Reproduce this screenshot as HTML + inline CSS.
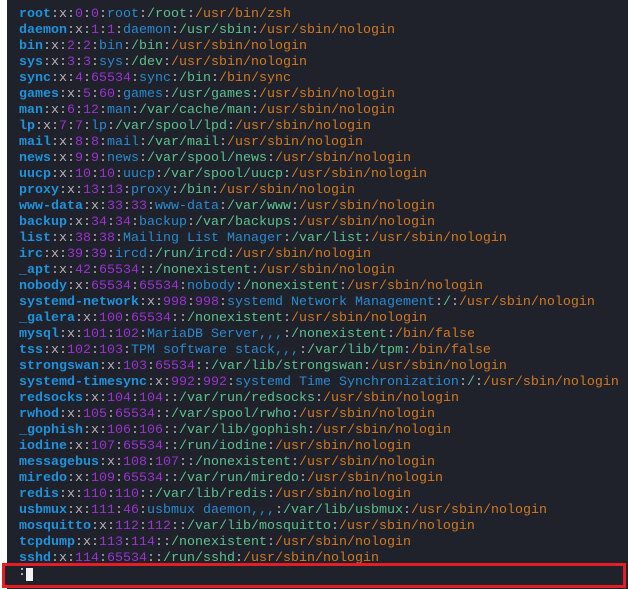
<!DOCTYPE html>
<html><head><meta charset="utf-8"><style>
html,body{margin:0;padding:0;width:628px;height:589px;overflow:hidden;background:#fff}
#t{position:absolute;left:7px;top:0;width:621px;height:589px;background:#1f212b;}
pre{position:absolute;left:19px;top:7px;margin:0;font-family:"Liberation Mono",monospace;font-size:13.33px;line-height:16px;color:#b9b3bb}
.u{color:#1f93dc;font-weight:bold}.n{color:#9b33cf}.g{color:#2a8bd0}.h{color:#5dc28e}.o{color:#d27a22}
#box{position:absolute;left:2px;top:563px;width:618px;height:19px;border:3px solid #e41e24;background:#1f212b}
#cur{position:absolute;left:26px;top:568px;width:7px;height:13px;background:#f2f2f2}
#col{position:absolute;left:18px;top:565px;font-family:"Liberation Mono",monospace;font-size:13.33px;line-height:16px;color:#ddd}
</style></head><body><div id="t"></div>
<pre><span class="u">root</span>:x:<span class="n">0</span>:<span class="n">0</span>:<span class="g">root</span>:<span class="h">/root</span>:<span class="o">/usr/bin/zsh</span>
<span class="u">daemon</span>:x:<span class="n">1</span>:<span class="n">1</span>:<span class="g">daemon</span>:<span class="h">/usr/sbin</span>:<span class="o">/usr/sbin/nologin</span>
<span class="u">bin</span>:x:<span class="n">2</span>:<span class="n">2</span>:<span class="g">bin</span>:<span class="h">/bin</span>:<span class="o">/usr/sbin/nologin</span>
<span class="u">sys</span>:x:<span class="n">3</span>:<span class="n">3</span>:<span class="g">sys</span>:<span class="h">/dev</span>:<span class="o">/usr/sbin/nologin</span>
<span class="u">sync</span>:x:<span class="n">4</span>:<span class="n">65534</span>:<span class="g">sync</span>:<span class="h">/bin</span>:<span class="o">/bin/sync</span>
<span class="u">games</span>:x:<span class="n">5</span>:<span class="n">60</span>:<span class="g">games</span>:<span class="h">/usr/games</span>:<span class="o">/usr/sbin/nologin</span>
<span class="u">man</span>:x:<span class="n">6</span>:<span class="n">12</span>:<span class="g">man</span>:<span class="h">/var/cache/man</span>:<span class="o">/usr/sbin/nologin</span>
<span class="u">lp</span>:x:<span class="n">7</span>:<span class="n">7</span>:<span class="g">lp</span>:<span class="h">/var/spool/lpd</span>:<span class="o">/usr/sbin/nologin</span>
<span class="u">mail</span>:x:<span class="n">8</span>:<span class="n">8</span>:<span class="g">mail</span>:<span class="h">/var/mail</span>:<span class="o">/usr/sbin/nologin</span>
<span class="u">news</span>:x:<span class="n">9</span>:<span class="n">9</span>:<span class="g">news</span>:<span class="h">/var/spool/news</span>:<span class="o">/usr/sbin/nologin</span>
<span class="u">uucp</span>:x:<span class="n">10</span>:<span class="n">10</span>:<span class="g">uucp</span>:<span class="h">/var/spool/uucp</span>:<span class="o">/usr/sbin/nologin</span>
<span class="u">proxy</span>:x:<span class="n">13</span>:<span class="n">13</span>:<span class="g">proxy</span>:<span class="h">/bin</span>:<span class="o">/usr/sbin/nologin</span>
<span class="u">www-data</span>:x:<span class="n">33</span>:<span class="n">33</span>:<span class="g">www-data</span>:<span class="h">/var/www</span>:<span class="o">/usr/sbin/nologin</span>
<span class="u">backup</span>:x:<span class="n">34</span>:<span class="n">34</span>:<span class="g">backup</span>:<span class="h">/var/backups</span>:<span class="o">/usr/sbin/nologin</span>
<span class="u">list</span>:x:<span class="n">38</span>:<span class="n">38</span>:<span class="g">Mailing List Manager</span>:<span class="h">/var/list</span>:<span class="o">/usr/sbin/nologin</span>
<span class="u">irc</span>:x:<span class="n">39</span>:<span class="n">39</span>:<span class="g">ircd</span>:<span class="h">/run/ircd</span>:<span class="o">/usr/sbin/nologin</span>
<span class="u">_apt</span>:x:<span class="n">42</span>:<span class="n">65534</span>::<span class="h">/nonexistent</span>:<span class="o">/usr/sbin/nologin</span>
<span class="u">nobody</span>:x:<span class="n">65534</span>:<span class="n">65534</span>:<span class="g">nobody</span>:<span class="h">/nonexistent</span>:<span class="o">/usr/sbin/nologin</span>
<span class="u">systemd-network</span>:x:<span class="n">998</span>:<span class="n">998</span>:<span class="g">systemd Network Management</span>:<span class="h">/</span>:<span class="o">/usr/sbin/nologin</span>
<span class="u">_galera</span>:x:<span class="n">100</span>:<span class="n">65534</span>::<span class="h">/nonexistent</span>:<span class="o">/usr/sbin/nologin</span>
<span class="u">mysql</span>:x:<span class="n">101</span>:<span class="n">102</span>:<span class="g">MariaDB Server,,,</span>:<span class="h">/nonexistent</span>:<span class="o">/bin/false</span>
<span class="u">tss</span>:x:<span class="n">102</span>:<span class="n">103</span>:<span class="g">TPM software stack,,,</span>:<span class="h">/var/lib/tpm</span>:<span class="o">/bin/false</span>
<span class="u">strongswan</span>:x:<span class="n">103</span>:<span class="n">65534</span>::<span class="h">/var/lib/strongswan</span>:<span class="o">/usr/sbin/nologin</span>
<span class="u">systemd-timesync</span>:x:<span class="n">992</span>:<span class="n">992</span>:<span class="g">systemd Time Synchronization</span>:<span class="h">/</span>:<span class="o">/usr/sbin/nologin</span>
<span class="u">redsocks</span>:x:<span class="n">104</span>:<span class="n">104</span>::<span class="h">/var/run/redsocks</span>:<span class="o">/usr/sbin/nologin</span>
<span class="u">rwhod</span>:x:<span class="n">105</span>:<span class="n">65534</span>::<span class="h">/var/spool/rwho</span>:<span class="o">/usr/sbin/nologin</span>
<span class="u">_gophish</span>:x:<span class="n">106</span>:<span class="n">106</span>::<span class="h">/var/lib/gophish</span>:<span class="o">/usr/sbin/nologin</span>
<span class="u">iodine</span>:x:<span class="n">107</span>:<span class="n">65534</span>::<span class="h">/run/iodine</span>:<span class="o">/usr/sbin/nologin</span>
<span class="u">messagebus</span>:x:<span class="n">108</span>:<span class="n">107</span>::<span class="h">/nonexistent</span>:<span class="o">/usr/sbin/nologin</span>
<span class="u">miredo</span>:x:<span class="n">109</span>:<span class="n">65534</span>::<span class="h">/var/run/miredo</span>:<span class="o">/usr/sbin/nologin</span>
<span class="u">redis</span>:x:<span class="n">110</span>:<span class="n">110</span>::<span class="h">/var/lib/redis</span>:<span class="o">/usr/sbin/nologin</span>
<span class="u">usbmux</span>:x:<span class="n">111</span>:<span class="n">46</span>:<span class="g">usbmux daemon,,,</span>:<span class="h">/var/lib/usbmux</span>:<span class="o">/usr/sbin/nologin</span>
<span class="u">mosquitto</span>:x:<span class="n">112</span>:<span class="n">112</span>::<span class="h">/var/lib/mosquitto</span>:<span class="o">/usr/sbin/nologin</span>
<span class="u">tcpdump</span>:x:<span class="n">113</span>:<span class="n">114</span>::<span class="h">/nonexistent</span>:<span class="o">/usr/sbin/nologin</span>
<span class="u">sshd</span>:x:<span class="n">114</span>:<span class="n">65534</span>::<span class="h">/run/sshd</span>:<span class="o">/usr/sbin/nologin</span></pre>
<div id="box"></div><div id="col">:</div><div id="cur"></div>
</body></html>
